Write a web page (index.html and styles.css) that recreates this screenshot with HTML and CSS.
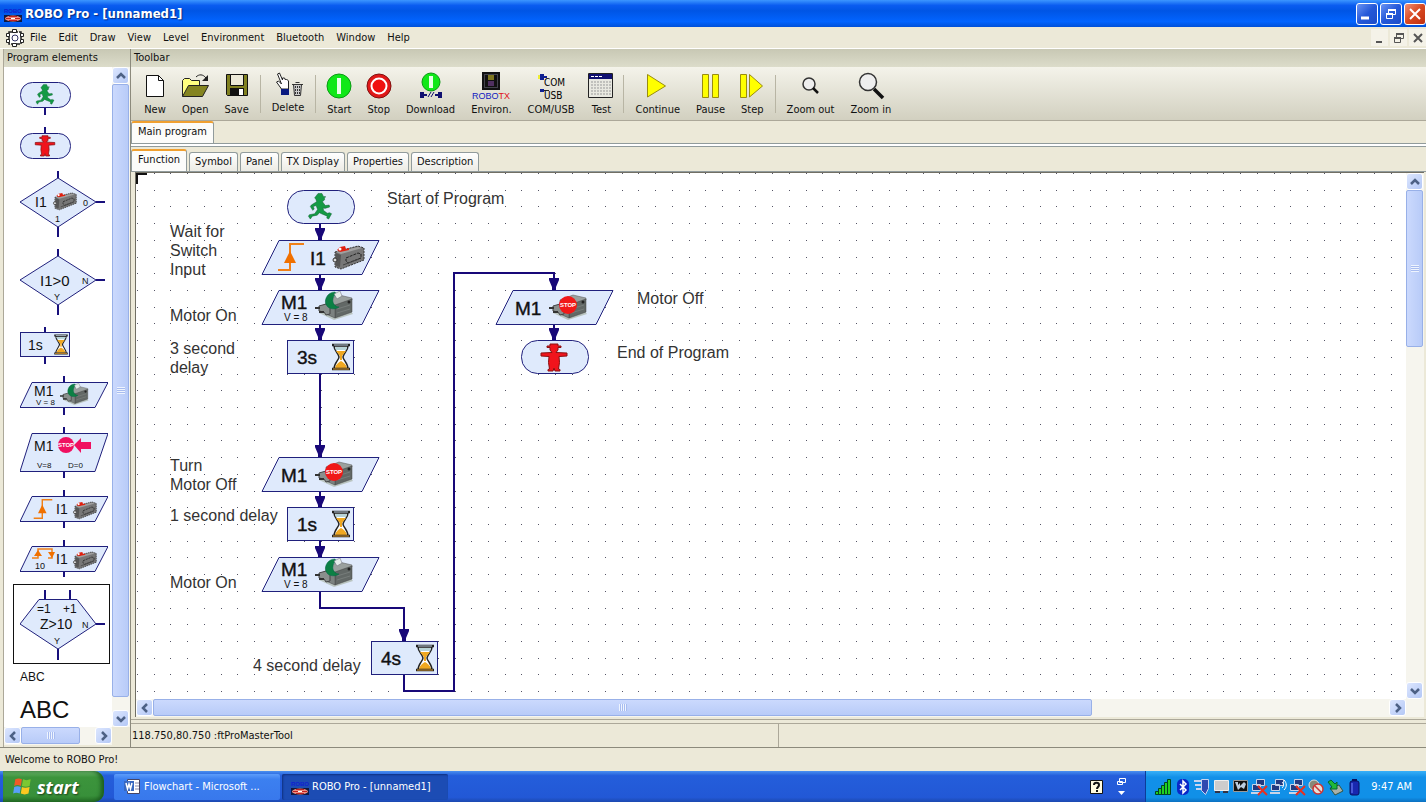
FILE: index.html
```html
<!DOCTYPE html>
<html lang="en">
<head>
  <meta charset="UTF-8" />
  <title>ROBO Pro - [unnamed1]</title>
  <link rel="stylesheet" href="styles.css">
</head>
<body>

  <!-- shared drawings -->
  <svg class="defs" aria-hidden="true">
    <symbol id="walker" viewBox="0 0 24 28" overflow="visible">
      <path fill="#149a45" stroke="#0c5a2c" stroke-width=".5" d="M8 3l2-2.500h4l1.500 3 2.500.5-1.500 1 .3 2-2.300 2 3 4 4-.5.5 2-5 1.500-1.500-1v3l4 3 2.500-.5 2 1-3 5.500-2-1 .5-2-6-2.500-2-1-2.500 2.500-5 1L2 27l-2-3 1-1.500 5.500-1L9.500 17 8 13l-3 1 1 2.500-1.500 1.500L2 14l1-1.500L8.500 9l-.5-2-1.500-2z"/>
    </symbol>
    <symbol id="stander" viewBox="0 0 28 28" overflow="visible">
      <path fill="#f0141c" stroke="#8a1010" d="M10 1h8v2h3v1.500h-3V7l-2 2.500L27 10v3l-8 .5.500 6-1 6.500 1.500.5v1.500h-5l-1-3-1 3H8v-1.500l1.500-.5-1-6.500.500-6L1 13v-3l11-.5L10 7V4.500H7V3h3z"/>
    </symbol>
    <symbol id="switch" viewBox="0 0 34 26" overflow="visible">
      <path fill="#777" stroke="#333" stroke-dasharray="2 1" d="M4 8L27 2l6 2v12L10 25l-6-2z"/>
      <path fill="#a0a0a0" d="M5 8l22-5 4 1L10 10z"/>
      <path fill="#555" d="M10 11l-1 12-4-1V9z"/>
      <path fill="#e02010" d="M6 6l3-3 5-1 1 3 3-1v2l-9 2z"/>
      <circle cx="9" cy="5" r="1.500" fill="#fff"/>
      <circle cx="4" cy="16" r="2" fill="#ddd" stroke="#333"/>
      <path fill="none" stroke="#222" stroke-dasharray="3 1" d="M15 14l12-5 3 1v4l-13 5-2-2z"/>
      <path stroke="#444" d="M12 21l16-6"/>
    </symbol>
    <symbol id="motor" viewBox="0 0 40 28" overflow="visible">
      <path fill="#b9c4c0" d="M4 21l15 7 19-6-3-4z"/>
      <path fill="#9aa09e" stroke="#555" stroke-width=".5" d="M11 8l13-5 13 3v2l-17 6z"/>
      <path fill="#626866" stroke="#444" stroke-width=".5" d="M20 13l17-6v13l-17 6z"/>
      <path fill="#7c8280" stroke="#444" stroke-width=".5" d="M11 8l9 5v13l-9-4z"/>
      <path fill="#8a8f8d" stroke="#444" d="M4 14l7-2 4 3v7l-4 1-2-3-5-1z"/>
      <path stroke="#333" stroke-width="2" d="M0 16h5M4 20h5"/>
      <path stroke="#777d7b" d="M22 17l13-4M22 21l13-4"/>
      <circle cx="34" cy="10" r="1.500" fill="#222"/>
    </symbol>
    <symbol id="motor-on" viewBox="0 0 40 28" overflow="visible">
      <use href="#motor" width="40" height="28"/>
      <path fill="#0c8044" stroke="#064" stroke-width=".5" d="M20 0c-8 0-12 9-8 14 2 3 8 4 12 1-4 0-7-4-6-8 0-2 1-4 4-4z"/>
      <path fill="#e4ece9" stroke="#667" stroke-width=".5" d="M19 2l6-3 2 5-5 3z"/>
    </symbol>
    <symbol id="motor-off" viewBox="0 0 40 28" overflow="visible">
      <use href="#motor" width="40" height="28"/>
      <circle cx="19" cy="13" r="9" fill="#f01818"/>
      <text class="stop-text" x="19" y="15" text-anchor="middle">STOP</text>
    </symbol>
    <symbol id="hourglass" viewBox="0 0 18 28" overflow="visible">
      <path fill="#fff" stroke="#222" stroke-width="1.500" d="M2 3c0 5 5 8 5 11S2 20 2 26h14c0-6-5-9-5-12s5-6 5-11z"/>
      <path fill="#b8d4d8" d="M3 4h12l-1 3H4z"/>
      <path fill="#f0a820" d="M4 8h10l-4 5H8zM8 13h2v4h-2zM3 25c1-4 4-6 6-7 2 1 5 3 6 7z"/>
      <path stroke="#222" stroke-width="2.500" d="M0 2h18M0 26h18"/>
      <path stroke="#d9982a" d="M1 26h16"/>
      <path stroke="#bcd" d="M2 2h14"/>
    </symbol>
    <symbol id="edge" viewBox="0 0 26 28" overflow="visible">
      <path fill="none" stroke="#f08018" stroke-width="2" d="M0 27h12V1h14"/>
      <path fill="#f07000" d="M12 8l6 12H6z"/>
    </symbol>
    <symbol id="windows" viewBox="0 0 20 20">
      <path fill="#f05a28" d="M3 3c2-1 4-1 6 0L8 9c-2-1-4-1-6 0z"/>
      <path fill="#7cc832" d="M10 3c2 1 4 1 7 0l-1 6c-2 1-5 1-7 0z"/>
      <path fill="#58a0f8" d="M2 10c2-1 4-1 6 0l-1 6c-2-1-4-1-6 0z"/>
      <path fill="#fcc820" d="M9 10c2 1 4 1 7 0l-1 6c-2 1-5 1-7 0z"/>
    </symbol>
    <symbol id="robo" viewBox="0 0 18 18" overflow="visible">
      <text class="robo-text" x="9" y="8" text-anchor="middle">ROBO</text>
      <path fill="#101840" d="M0 10h18v7H0z"/>
      <ellipse cx="9" cy="13.500" rx="8" ry="3" fill="#f09080"/>
      <path stroke="#c02020" d="M2 13.500h14M5 11.500h8M5 15.500h8"/>
      <path stroke="#fff" d="M7 13.500h4"/>
    </symbol>
    <symbol id="restore" viewBox="0 0 14 14">
      <path fill="none" stroke="currentColor" d="M4.500 6V2.500h7v5H9"/>
      <path stroke="currentColor" stroke-width="2" d="M4 3h8M2 7h7"/>
      <path fill="none" stroke="currentColor" d="M2.500 6.500h6v5h-6z"/>
    </symbol>
    <symbol id="chevron" viewBox="0 0 10 10">
      <path fill="none" stroke="#4d6185" stroke-width="2.500" d="M1 7l4-4 4 4"/>
    </symbol>
    <symbol id="computers" viewBox="0 0 18 18">
      <path fill="#223a80" stroke="#c8d4e8" d="M6.500 1.500h8v6h-8zM2.500 6.500h8v6h-8z"/>
      <path stroke="#c8d4e8" stroke-width="2" d="M1 15h10"/>
    </symbol>
  </svg>

  <header class="titlebar">
    <svg class="icon18"><use href="#robo"/></svg>
    <h1>ROBO Pro - [unnamed1]</h1>
    <div class="window-buttons">
      <button class="winbtn" aria-label="Minimize"><svg width="14" height="14"><path stroke="#fff" stroke-width="3" d="M1 11h8"/></svg></button>
      <button class="winbtn" aria-label="Restore"><svg width="14" height="14"><use href="#restore"/></svg></button>
      <button class="winbtn close" aria-label="Close"><svg width="14" height="14"><path stroke="#fff" stroke-width="2" d="M2 2l10 10M12 2L2 12"/></svg></button>
    </div>
  </header>

  <nav class="menubar">
    <svg class="icon18" viewBox="0 0 18 18">
      <path fill="#fff" stroke="#222" stroke-width="1.500" stroke-dasharray="4 1" d="M3 3h12v12H3z"/>
      <path fill="#fff" stroke="#222" d="M6.500.5h4v3h-4zM6.500 14.500h4v3h-4zM.5 4.500h3v3h-3zM.5 10.500h3v3h-3zM14.500 4.500h3v3h-3zM14.500 10.500h3v3h-3z"/>
      <circle cx="9" cy="9" r="3" fill="#fff" stroke="#336"/>
    </svg>
    <a href="#">File</a>
    <a href="#">Edit</a>
    <a href="#">Draw</a>
    <a href="#">View</a>
    <a href="#">Level</a>
    <a href="#">Environment</a>
    <a href="#">Bluetooth</a>
    <a href="#">Window</a>
    <a href="#">Help</a>
    <div class="mdi-buttons">
      <button aria-label="Minimize document"><svg width="14" height="14"><path stroke="#555" stroke-width="2" d="M3 11h6"/></svg></button>
      <button aria-label="Restore document"><svg width="14" height="14"><use href="#restore"/></svg></button>
      <button aria-label="Close document"><svg width="14" height="14"><path stroke="#555" stroke-width="2" d="M3 3l8 8M11 3l-8 8"/></svg></button>
    </div>
  </nav>

  <main class="main">
    <aside class="side">
      <h2 class="panel-title">Program elements</h2>
      <div class="side-body">
        <div class="side-left">
          <div class="elements">
            <button aria-label="Start"><svg width="51" height="33">
              <path class="wire" d="M25 26v7"/><rect class="shape" x=".5" y=".5" width="50" height="25" rx="12"/>
              <use href="#walker" x="16" y="2" width="18" height="21"/></svg></button>
            <button aria-label="End"><svg width="51" height="32">
              <path class="wire" d="M25 0v6"/><rect class="shape" x=".5" y="6.500" width="50" height="25" rx="12"/>
              <use href="#stander" x="14" y="8" width="22" height="21"/></svg></button>
            <button aria-label="Digital branch"><svg width="86" height="66">
              <path class="wire" d="M38 0v7M38 56v10M76 31h9"/><path class="shape" d="M0 31L38 7l38 24-38 25z"/>
              <text class="t14" x="15" y="36">I1</text><use href="#switch" x="32" y="20" width="25" height="20"/>
              <text class="t9" x="63" y="35">0</text><text class="t9" x="35" y="51">1</text></svg></button>
            <button aria-label="Analog branch"><svg width="86" height="66">
              <path class="wire" d="M38 0v7M38 56v10M76 31h9"/><path class="shape" d="M0 31L38 7l38 24-38 25z"/>
              <text class="t15" x="20" y="37">I1&gt;0</text><text class="t9" x="62" y="35">N</text><text class="t9" x="34" y="51">Y</text></svg></button>
            <button aria-label="Time delay"><svg width="51" height="37">
              <path class="wire" d="M25 0v6M25 30v7"/><rect class="shape" x=".5" y="5.500" width="49" height="24"/>
              <text class="t14" x="8" y="23">1s</text><use href="#hourglass" x="34" y="7" width="14" height="21"/></svg></button>
            <button aria-label="Motor output"><svg width="88" height="39">
              <path class="wire" d="M44 0v7M44 32v7"/><path class="shape" d="M12 6.500h76L75 31.500H0z"/>
              <text class="t14" x="14" y="20">M1</text><text class="t8" x="16" y="29">V = 8</text><use href="#motor-on" x="40" y="8" width="30" height="21"/></svg></button>
            <button aria-label="Encoder motor"><svg width="88" height="51">
              <path class="wire" d="M44 0v7M44 44v7"/><path class="shape" d="M12 6.500h76L75 44.500H0z"/>
              <text class="t14" x="14" y="24">M1</text><text class="t8" x="17" y="41">V=8</text><text class="t8" x="48" y="41">D=0</text>
              <path fill="#f01060" d="M54 18l7-7v4h10v7H61v4z"/><circle cx="46" cy="18" r="8" fill="#f01060"/>
              <text class="stop-text" x="46" y="20" text-anchor="middle">STOP</text></svg></button>
            <button aria-label="Wait for input"><svg width="88" height="38">
              <path class="wire" d="M44 0v7M44 32v6"/><path class="shape" d="M12 6.500h76L75 31.500H0z"/>
              <use href="#edge" x="13" y="9" width="20" height="20"/><text class="t14" x="36" y="24">I1</text><use href="#switch" x="52" y="10" width="25" height="20"/></svg></button>
            <button aria-label="Pulse counter"><svg width="88" height="37">
              <path class="wire" d="M44 0v7M44 32v5"/><path class="shape" d="M12 6.500h76L75 31.500H0z"/>
              <path fill="none" stroke="#f08018" stroke-width="1.500" d="M12 18h6V9h14v9h-4"/><path fill="#f07000" d="M14 16l4-6 4 6zM28 12h7l-3 6z"/>
              <text class="t9" x="15" y="29">10</text><text class="t14" x="36" y="24">I1</text><use href="#switch" x="52" y="10" width="25" height="20"/></svg></button>
            <button class="selected" aria-label="Counter loop"><svg width="86" height="70">
              <path class="wire" d="M25 0v9M50 0v9M38 59v11M76 34h9"/><path class="shape" d="M19 9.500h38L76 34 38 59 0 34z"/>
              <text class="t12" x="17" y="23">=1</text><text class="t12" x="43" y="23">+1</text><text class="t14" x="20" y="39">Z&gt;10</text>
              <text class="t9" x="62" y="38">N</text><text class="t9" x="34" y="54">Y</text></svg></button>
            <button class="label-small">ABC</button>
            <button class="label-big">ABC</button>
          </div>
          <div class="hscroll">
            <button class="arrow left" aria-label="Scroll left"><svg width="10" height="10"><use href="#chevron"/></svg></button>
            <div class="track"><div class="thumb side-h"><span class="grip"></span></div></div>
            <button class="arrow right" aria-label="Scroll right"><svg width="10" height="10"><use href="#chevron"/></svg></button>
          </div>
        </div>
        <div class="vscroll">
          <button class="arrow up" aria-label="Scroll up"><svg width="10" height="10"><use href="#chevron"/></svg></button>
          <div class="track"><div class="thumb side-v"><span class="grip"></span></div></div>
          <button class="arrow down" aria-label="Scroll down"><svg width="10" height="10"><use href="#chevron"/></svg></button>
        </div>
      </div>
    </aside>

    <section class="work">
      <h2 class="panel-title">Toolbar</h2>
      <div class="toolbar">
        <button><svg viewBox="0 0 30 30"><path fill="#fff" stroke="#111" d="M6.500 4.500h12l5 5v16h-17z"/><path fill="none" stroke="#111" d="M18.500 4.500v5h5"/></svg>New</button>
        <button><svg viewBox="0 0 30 30"><path fill="#ffff80" stroke="#222" d="M2.500 25.500v-16l2-2h5l2 2h8v5"/><path fill="#848420" stroke="#222" d="M2.500 25.500l6-11h20l-6 11z"/><path fill="none" stroke="#222" d="M16 6c3-3 7-3 10 1"/><path fill="#222" d="M28 4v6h-6z"/></svg>Open</button>
        <button><svg viewBox="0 0 30 30"><path fill="#808020" stroke="#111" d="M4.500 3.500h21v21h-20l-1-1z"/><path fill="#ece9d8" stroke="#111" d="M8.500 3.500h13v11h-13z"/><path fill="#111" d="M8 17h14v8H8z"/><path fill="#fff" d="M17 18h4v6h-4z"/></svg>Save</button>
        <span class="sep"></span>
        <button class="raised"><svg viewBox="0 0 30 30"><path fill="#fff" stroke="#222" d="M8.500 20l-5-7 2-1 3 3-4-10 2-1 3 7 0-2 2 0 1 2 1-1 2 2v8z"/><path fill="#0a1a80" d="M8 20h8v6H8z"/><path fill="#ccc" stroke="#333" d="M20.500 15.500h8l-1 11h-6zM19 15.500h11M22.500 13.500h4"/><path stroke="#333" stroke-dasharray="2 1" d="M22.500 17v9M24.500 17v9M26.500 17v9"/></svg>Delete</button>
        <span class="sep"></span>
        <button><svg viewBox="0 0 30 30"><circle cx="15" cy="15" r="12" fill="#10e818" stroke="#0b9a14"/><path fill="#e8ffe8" d="M13 7h4v16h-4z"/></svg>Start</button>
        <button><svg viewBox="0 0 30 30"><circle cx="15" cy="15" r="12" fill="#e01818" stroke="#801010"/><circle cx="15" cy="15" r="7.500" fill="#f01010" stroke="#fff" stroke-width="2"/></svg>Stop</button>
        <button><svg viewBox="0 0 30 30"><circle cx="15" cy="11" r="9" fill="#10e818" stroke="#0b9a14"/><path fill="#e8ffe8" d="M13 5h4v12h-4z"/><path fill="#101070" d="M4 21h4v2h3v2H8v2H4zM26 21h-4v2h-3v2h3v2h4z"/><path stroke="#101070" d="M12 26l3-5M15 26l3-5"/></svg>Download</button>
        <button><svg viewBox="0 0 30 30"><path fill="#111" d="M6 1h18v18H6z"/><path fill="none" stroke="#778" stroke-dasharray="1 1" d="M8.500 3.500h13v13h-13z"/><path fill="#807820" d="M12 4h6v5h-6z"/><path fill="#503060" d="M12 10h6v5h-6z"/><text class="robotx" x="15" y="28" text-anchor="middle">ROBO<tspan fill="#e01020">TX</tspan></text></svg>Environ.</button>
        <button><svg viewBox="0 0 30 30"><path fill="#102090" d="M4 3h4v2h3v2H8v2H4zM4 18h4v3H4z"/><path fill="#ee3" d="M2 4h2v4H2z"/><path stroke="#222" d="M8 19.500h5"/><text class="comusb" x="8" y="15">COM</text><text class="comusb" x="8" y="28">USB</text></svg>COM/USB</button>
        <button><svg viewBox="0 0 30 30"><path fill="#e8e8e0" stroke="#222" d="M2.500 2.500h24v24h-24z"/><path fill="#101070" d="M3 3h23v5H3z"/><path stroke="#fff" stroke-dasharray="3 1" d="M5 5.500h11"/><path stroke="#999" stroke-dasharray="2 1" d="M5 11h20M5 14h20M5 17h20M5 20h20M5 23h20"/></svg>Test</button>
        <span class="sep"></span>
        <button><svg viewBox="0 0 30 30"><path fill="#ff0" stroke="#998c10" d="M4.500 3.500l18 11.500-18 11z"/></svg>Continue</button>
        <button><svg viewBox="0 0 30 30"><path fill="#ff0" stroke="#998c10" d="M6.500 3.500h6v23h-6zM16.500 3.500h6v23h-6z"/></svg>Pause</button>
        <button><svg viewBox="0 0 30 30"><path fill="#ff0" stroke="#998c10" d="M3.500 3.500h6v23h-6zM12.500 3.500l13 11.500-13 11z"/></svg>Step</button>
        <span class="sep"></span>
        <button><svg viewBox="0 0 30 30"><circle cx="13" cy="13" r="6" fill="#eee" stroke="#333" stroke-width="1.500"/><path stroke="#111" stroke-width="2.500" d="M17 17l5 5"/></svg>Zoom out</button>
        <button><svg viewBox="0 0 30 30"><circle cx="12" cy="11" r="8.500" fill="#eee" stroke="#333" stroke-width="1.500"/><path stroke="#111" stroke-width="3.500" d="M18 18l9 9"/></svg>Zoom in</button>
      </div>

      <div class="tabs program-tabs">
        <button class="tab active">Main program</button>
      </div>
      <div class="tabs view-tabs">
        <button class="tab active">Function</button>
        <button class="tab">Symbol</button>
        <button class="tab">Panel</button>
        <button class="tab">TX Display</button>
        <button class="tab">Properties</button>
        <button class="tab">Description</button>
      </div>

      <div class="canvas-frame">
        <div class="canvas-row">
          <svg class="canvas" role="img" aria-label="Flowchart">
            <defs>
              <path id="dotrow" stroke="#556" d="M1 .5h1M18 .5h1M34 .5h1M51 .5h1M68 .5h1M85 .5h1M101 .5h1"/>
              <pattern id="dots" width="117" height="117" patternUnits="userSpaceOnUse">
                <use href="#dotrow"/>
                <use href="#dotrow" y="17"/>
                <use href="#dotrow" y="33"/>
                <use href="#dotrow" y="50"/>
                <use href="#dotrow" y="67"/>
                <use href="#dotrow" y="84"/>
                <use href="#dotrow" y="100"/>
              </pattern>
              <marker id="arrow" markerUnits="userSpaceOnUse" markerWidth="10" markerHeight="12" refX="5" refY="12">
                <path fill="#180878" d="M0 0h10v2L7 9v3H3V9L0 2z"/>
              </marker>
            </defs>
            <rect class="dots" width="100%" height="100%"/>
            <path fill="none" stroke="#111" stroke-width="2" d="M1 11V1h10"/>

            <!-- connections -->
            <path class="flow" d="M184 51v16"/>
            <path class="flow" d="M184 101v16"/>
            <path class="flow" d="M184 151v16"/>
            <path class="flow" d="M184 200v84"/>
            <path class="flow" d="M184 318v17"/>
            <path class="flow" d="M184 368v17"/>
            <path class="flow" d="M184 419v16h84v33"/>
            <path class="flow" d="M268 501v17h50V100h100v17"/>
            <path class="flow" d="M418 151v16"/>

            <!-- nodes -->
            <g transform="translate(151 17)">
              <rect class="shape" x=".5" y=".5" width="67" height="33" rx="16"/>
              <use href="#walker" x="21" y="3" width="24" height="27"/>
            </g>
            <g transform="translate(126 67)">
              <path class="shape" d="M17 .5h100l-17 34H0z"/>
              <use href="#edge" x="16" y="3" width="26" height="28"/>
              <text class="node-text" x="48" y="25">I1</text>
              <use href="#switch" x="69" y="4" width="34" height="26"/>
            </g>
            <g transform="translate(126 117)">
              <path class="shape" d="M17 .5h100l-17 34H0z"/>
              <text class="node-text" x="19" y="19">M1</text>
              <text class="node-sub" x="22" y="31">V = 8</text>
              <use href="#motor-on" x="53" y="2" width="40" height="28"/>
            </g>
            <g transform="translate(151 167)">
              <rect class="shape" x=".5" y=".5" width="66" height="33"/>
              <text class="node-text" x="10" y="24">3s</text>
              <use href="#hourglass" x="45" y="3" width="18" height="28"/>
            </g>
            <g transform="translate(126 284)">
              <path class="shape" d="M17 .5h100l-17 34H0z"/>
              <text class="node-text" x="19" y="25">M1</text>
              <use href="#motor-off" x="53" y="2" width="40" height="28"/>
            </g>
            <g transform="translate(151 334)">
              <rect class="shape" x=".5" y=".5" width="66" height="33"/>
              <text class="node-text" x="10" y="24">1s</text>
              <use href="#hourglass" x="45" y="3" width="18" height="28"/>
            </g>
            <g transform="translate(126 384)">
              <path class="shape" d="M17 .5h100l-17 34H0z"/>
              <text class="node-text" x="19" y="19">M1</text>
              <text class="node-sub" x="22" y="31">V = 8</text>
              <use href="#motor-on" x="53" y="2" width="40" height="28"/>
            </g>
            <g transform="translate(235 468)">
              <rect class="shape" x=".5" y=".5" width="66" height="33"/>
              <text class="node-text" x="10" y="24">4s</text>
              <use href="#hourglass" x="45" y="3" width="18" height="28"/>
            </g>
            <g transform="translate(360 117)">
              <path class="shape" d="M17 .5h100l-17 34H0z"/>
              <text class="node-text" x="19" y="25">M1</text>
              <use href="#motor-off" x="53" y="2" width="40" height="28"/>
            </g>
            <g transform="translate(385 167)">
              <rect class="shape" x=".5" y=".5" width="67" height="33" rx="16"/>
              <use href="#stander" x="19" y="3" width="28" height="28"/>
            </g>

            <!-- comments on the sheet -->
            <g class="notes">
              <text x="251" y="31">Start of Program</text>
              <text x="34" y="64">Wait for<tspan x="34" dy="19">Switch</tspan><tspan x="34" dy="19">Input</tspan></text>
              <text x="34" y="148">Motor On</text>
              <text x="34" y="181">3 second<tspan x="34" dy="19">delay</tspan></text>
              <text x="34" y="298">Turn<tspan x="34" dy="19">Motor Off</tspan></text>
              <text x="34" y="348">1 second delay</text>
              <text x="34" y="415">Motor On</text>
              <text x="117" y="498">4 second delay</text>
              <text x="501" y="131">Motor Off</text>
              <text x="481" y="185">End of Program</text>
            </g>
          </svg>
          <div class="vscroll">
            <button class="arrow up" aria-label="Scroll up"><svg width="10" height="10"><use href="#chevron"/></svg></button>
            <div class="track"><div class="thumb canvas-v"><span class="grip"></span></div></div>
            <button class="arrow down" aria-label="Scroll down"><svg width="10" height="10"><use href="#chevron"/></svg></button>
          </div>
        </div>
        <div class="hscroll corner">
          <button class="arrow left" aria-label="Scroll left"><svg width="10" height="10"><use href="#chevron"/></svg></button>
          <div class="track"><div class="thumb canvas-h"><span class="grip"></span></div></div>
          <button class="arrow right" aria-label="Scroll right"><svg width="10" height="10"><use href="#chevron"/></svg></button>
        </div>
      </div>

      <div class="tool-status">
        <span>118.750,80.750 :ftProMasterTool</span>
        <span></span>
      </div>
    </section>
  </main>

  <div class="statusbar">Welcome to ROBO Pro!</div>

  <footer class="taskbar">
    <button class="start"><svg width="22" height="22"><use href="#windows"/></svg>start</button>
    <button class="task"><svg width="18" height="18"><path fill="#fff" stroke="#446" d="M4.500 1.500h12v14h-12z"/><path stroke="#88a" d="M12 5h4M12 8h4M12 11h4"/><path fill="#3868c0" d="M1 3h10v10H1z"/><path fill="none" stroke="#fff" stroke-width="1.500" d="M3 5l1.500 6L6 6l1.500 5L9 5"/></svg>Flowchart - Microsoft ...</button>
    <button class="task pressed"><svg width="18" height="18"><use href="#robo"/></svg>ROBO Pro - [unnamed1]</button>
    <div class="langbar">
      <svg width="14" height="16"><path fill="#fffbe0" stroke="#111" d="M.5 1.500h12v13H.5z"/><path fill="none" stroke="#111" stroke-width="2" d="M4 6c0-3 5-3 5 0 0 2-2 2-2 4M7 11v2"/></svg>
      <svg width="12" height="20"><path fill="none" stroke="#fff" d="M3.500 1.500h6v4h-6zM1.500 4.500h5v3h-5z"/><path fill="#fff" d="M2 14h7l-3.500 4z"/></svg>
    </div>
    <div class="tray">
      <svg viewBox="0 0 18 18"><path fill="#20d020" stroke="#042" d="M.5 13.500h3v3h-3zM3.500 10.500h3v6h-3zM6.500 7.500h3v9h-3zM9.500 4.500h3v12h-3zM12.500 1.500h3v15h-3z"/></svg>
      <svg viewBox="0 0 18 18"><rect x="3" y="1" width="12" height="16" rx="5" fill="#0a28c8"/><path fill="none" stroke="#fff" stroke-width="1.500" d="M6 6l6 6-3 3V3l3 3-6 6"/></svg>
      <svg viewBox="0 0 18 18"><path fill="#3048b0" stroke="#c8d4f0" d="M8.500 1.500h7v9l-3 6-4-4z"/><path stroke="#c8d4f0" stroke-width="2" d="M1 3h7M2 7h6M3 11h6"/></svg>
      <svg viewBox="0 0 18 18"><path fill="#ccc" stroke="#eee" d="M2.500 2.500h14v10h-14z"/><path stroke="#334" stroke-width="2" d="M3 14h5M11 14h5"/></svg>
      <svg viewBox="0 0 18 18"><path fill="#111" stroke="#999" d="M2.500 2.500h14v11h-14z"/><path fill="#bcd" d="M4 4h3v3l2-2v3l4-4 2 2-2 5-3-2-3 3z"/></svg>
      <svg viewBox="0 0 18 18"><use href="#computers"/><path stroke="#e83020" stroke-width="2" d="M8 8l9 9M17 8l-9 9"/></svg>
      <svg viewBox="0 0 18 18"><use href="#computers"/><path fill="none" stroke="#fff" d="M13 4c2 2 2 4 0 6M15 2c3 3 3 7 0 10"/></svg>
      <svg viewBox="0 0 18 18"><use href="#computers"/><path stroke="#e83020" stroke-width="2" d="M8 8l9 9M17 8l-9 9"/></svg>
      <svg viewBox="0 0 18 18"><circle cx="7" cy="7" r="5" fill="#887" stroke="#ddd"/><circle cx="11" cy="11" r="5" fill="#e8e0d8" stroke="#c33" stroke-width="1.500"/><path stroke="#c33" stroke-width="1.500" d="M8 8l6 6"/></svg>
      <svg viewBox="0 0 18 18"><path fill="#a8b0a8" stroke="#354" d="M4 10l9-3 4 6-8 4z"/><path fill="#20b838" stroke="#063" d="M2 4l3-2 4 4 2-2v7H4l2-2z"/></svg>
      <svg viewBox="0 0 18 18"><rect x="5" y="3" width="9" height="14" rx="2" fill="#1828b0" stroke="#081060"/><path fill="#081060" d="M7 1h5v2H7z"/><path stroke="#78f" d="M7 5v10"/></svg>
      <span class="clock">9:47 AM</span>
    </div>
  </footer>

</body>
</html>
```
FILE: styles.css
```css
* {
  box-sizing: border-box;
}
body {
  margin: 0;
  height: 100vh;
  display: flex;
  flex-direction: column;
  background: #ece9d8;
  color: #111;
  font: 11px/14px "DejaVu Sans Condensed", "Noto Sans", sans-serif;
  overflow: hidden;
}
button {
  font: inherit;
  color: inherit;
  border: none;
  background: none;
  padding: 0;
}
h1, h2 {
  margin: 0;
  font-size: inherit;
  font-weight: normal;
}
svg {
  display: block;
  flex: none;
}
.defs {
  position: absolute;
  width: 0;
  height: 0;
}
.icon18 {
  width: 18px;
  height: 18px;
}

/* title and menu */
.titlebar {
  display: flex;
  align-items: center;
  gap: 3px;
  height: 27px;
  padding-left: 4px;
  background: linear-gradient(#3c96ff, #0a5cf0 20%, #0055e5 40%, #0264ff 80%, #0050d8);
  color: #fff;
}
.titlebar h1 {
  font-size: 13px;
  font-weight: bold;
  text-shadow: 1px 1px 1px #0a2a80;
}
.window-buttons, .mdi-buttons {
  display: flex;
  gap: 2px;
  margin-left: auto;
}
.winbtn {
  display: grid;
  place-items: center;
  width: 22px;
  height: 22px;
  border: 1px solid #fff;
  border-radius: 3px;
  background: linear-gradient(135deg, #6a94f4, #2458d8 50%, #1c4cc8);
}
.winbtn.close {
  background: linear-gradient(135deg, #f09078, #d84820 50%, #c03010);
}
.menubar {
  display: flex;
  align-items: center;
  height: 22px;
  padding-left: 6px;
  border-bottom: 1px solid #fff;
}
.menubar a {
  color: inherit;
  text-decoration: none;
  padding: 0 6px;
}
.mdi-buttons button {
  display: grid;
  place-items: center;
  width: 17px;
  height: 17px;
  background: #f4f2e8;
  color: #555;
}

/* layout */
.main {
  display: flex;
  flex: 1;
  min-height: 0;
  padding-left: 3px;
}
.side {
  display: flex;
  flex-direction: column;
  width: 128px;
  border-left: 1px solid #aca899;
  border-right: 1px solid #8c8a7c;
}
.panel-title {
  height: 18px;
  padding: 2px 3px;
  background: linear-gradient(#c8c8b4, #dcdcca);
}
.side-body {
  display: flex;
  flex: 1;
  min-height: 0;
  padding-bottom: 2px;
}
.side-left {
  display: flex;
  flex-direction: column;
  flex: 1;
  min-width: 0;
  background: #fff;
}
.side-body > .vscroll {
  padding-bottom: 18px;
  background-clip: content-box;
}
.elements {
  display: flex;
  flex-direction: column;
  align-items: flex-start;
  gap: 12px;
  flex: 1;
  min-height: 0;
  padding: 15px 0 0 9px;
  overflow: hidden;
}
.elements button {
  padding-left: 7px;
}
.elements .selected {
  padding: 5px 3px 3px 6px;
  border: 1px solid #111;
  margin: -5px 0 -6px;
}
.elements .label-small {
  font: 12px/14px "Liberation Sans", sans-serif;
}
.elements .label-big {
  font: 24px/28px "Liberation Sans", sans-serif;
}

/* flowchart shapes */
.shape {
  fill: #dfeafc;
  stroke: #20207c;
}
.wire {
  stroke: #18107c;
  stroke-width: 2;
}
.elements text, .canvas text {
  font-family: "Liberation Sans", sans-serif;
  fill: #111;
}
.t15 { font-size: 15px; }
.t14 { font-size: 14px; }
.t12 { font-size: 12px; }
.t9 { font-size: 9px; }
.t8 { font-size: 8px; }
.stop-text, .elements .stop-text, .canvas .stop-text {
  font: bold 6px "Liberation Sans", sans-serif;
  fill: #fff;
}
.robo-text {
  font: bold 6px "Liberation Sans", sans-serif;
  fill: #1020d0;
}
.robotx {
  font: 9px "Liberation Sans", sans-serif;
  fill: #1020c0;
}
.comusb {
  font: 10px "DejaVu Sans Condensed", sans-serif;
}

/* toolbar */
.work {
  display: flex;
  flex-direction: column;
  flex: 1;
  min-width: 0;
}
.toolbar {
  display: flex;
  align-items: center;
  height: 54px;
  padding-left: 5px;
  background: linear-gradient(#f4f3ea, #d2d0c0);
  border-bottom: 1px solid #aca899;
}
.toolbar button {
  display: flex;
  flex-direction: column;
  align-items: center;
  gap: 2px;
  padding: 0 8px;
}
.toolbar button svg {
  width: 30px;
  height: 30px;
  margin: 0 -4px;
  overflow: visible;
}
.toolbar .raised {
  padding-bottom: 4px;
}
.sep {
  width: 1px;
  height: 38px;
  margin: 0 3px;
  background: #b8b5a4;
}

/* tabs */
.tabs {
  display: flex;
  align-items: flex-end;
  border-bottom: 1px solid #919b9c;
}
.program-tabs {
  height: 23px;
}
.view-tabs {
  gap: 2px;
  height: 26px;
  border-top: 1px solid #919b9c;
  margin-top: 2px;
  box-shadow: 0 -2px 0 #fff;
}
.tab {
  height: 19px;
  padding: 0 5px;
  border: 1px solid #919b9c;
  border-bottom: none;
  border-radius: 3px 3px 0 0;
  background: linear-gradient(#fff, #ecebe4);
}
.tab.active {
  height: 22px;
  padding: 0 6px 2px;
  border-top: 2px solid #f0a030;
  background: #fcfcfa;
}

/* drawing sheet */
.canvas-frame {
  display: flex;
  flex-direction: column;
  flex: 1;
  min-height: 0;
  margin: 0 2px 0 4px;
  border: 1px solid #716f64;
  border-width: 1px 0 0 1px;
  background: #fff;
}
.canvas-row {
  display: flex;
  flex: 1;
  min-height: 0;
}
.canvas {
  flex: 1;
  min-width: 0;
  height: 100%;
  overflow: hidden;
}
.dots {
  fill: url(#dots);
}
.flow {
  fill: none;
  stroke: #180878;
  stroke-width: 2;
  marker-end: url(#arrow);
}
.node-text {
  font-size: 19px;
  stroke: #111;
  stroke-width: .4;
}
.node-sub {
  font-size: 10px;
}
.canvas .notes text {
  font-size: 16px;
  fill: #333;
}

/* scroll bars */
.vscroll {
  display: flex;
  flex-direction: column;
  width: 18px;
  background: #f6f5ee;
}
.hscroll {
  display: flex;
  height: 18px;
  background: #f6f5ee;
}
.hscroll.corner {
  padding-right: 18px;
}
.arrow {
  display: grid;
  place-items: center;
  width: 17px;
  height: 17px;
  border: 1px solid #fff;
  border-radius: 3px;
  background: linear-gradient(135deg, #dce6fe, #b4c8f6);
}
.arrow.left svg { transform: rotate(-90deg); }
.arrow.right svg { transform: rotate(90deg); }
.arrow.down svg { transform: rotate(180deg); }
.track {
  flex: 1;
}
.thumb {
  display: grid;
  place-items: center;
  width: 17px;
  height: 17px;
  border: 1px solid #98b0e8;
  border-radius: 2px;
  background: linear-gradient(90deg, #cbd9fd, #b8cbf8);
}
.hscroll .thumb {
  background: linear-gradient(#cbd9fd, #b8cbf8);
}
.thumb.side-v { height: 98%; }
.thumb.side-h { width: 80%; }
.thumb.canvas-v { height: 32%; }
.thumb.canvas-h { width: 76%; }
.grip {
  width: 8px;
  height: 7px;
  background: repeating-linear-gradient(#eef4fe 0 1px, #a8bcf0 1px 2px);
}
.hscroll .grip {
  background: repeating-linear-gradient(90deg, #eef4fe 0 1px, #a8bcf0 1px 2px);
}

/* status bars */
.tool-status {
  display: flex;
  height: 28px;
  margin-top: 2px;
  border-top: 1px solid #aca899;
  padding-top: 3px;
}
.tool-status span {
  flex: 1;
  padding: 5px 1px;
  border-top: 1px solid #aca899;
}
.tool-status span + span {
  border-left: 1px solid #aca899;
}
.statusbar {
  height: 24px;
  padding: 5px;
  border-top: 1px solid #8c8a7c;
}

/* taskbar */
.taskbar {
  display: flex;
  align-items: center;
  height: 31px;
  padding-left: 3px;
  background: linear-gradient(#4a90f0, #245edb 15%, #2258d6 85%, #1c48b0);
  color: #fff;
}
.start {
  display: flex;
  align-items: center;
  gap: 3px;
  width: 101px;
  height: 31px;
  margin-right: 10px;
  padding-left: 9px;
  border-radius: 0 10px 10px 0;
  background: linear-gradient(#70b870, #3c943c 20%, #38903a 80%, #267026);
  box-shadow: inset -3px 0 4px #1c5c20;
  font: italic bold 18px "Open Sans", sans-serif;
  text-shadow: 1px 1px 2px #1c4018;
}
.task {
  display: flex;
  align-items: center;
  gap: 3px;
  width: 166px;
  height: 26px;
  margin-right: 2px;
  padding-left: 9px;
  border-radius: 2px;
  background: linear-gradient(#5c9cfa, #3c80f0 20%, #3878ec);
  white-space: nowrap;
}
.task.pressed {
  background: #1c4cb4;
  box-shadow: inset 1px 1px 2px #103080;
}
.titlebar .icon18, .task svg {
  overflow: visible;
}
.langbar {
  display: flex;
  align-items: center;
  gap: 12px;
  margin-left: auto;
  padding-right: 17px;
}
.tray {
  display: flex;
  align-items: center;
  gap: 1px;
  height: 31px;
  padding: 0 14px 0 9px;
  border-left: 1px solid #0c3c98;
  background: linear-gradient(#38b0f8, #1290e8 20%, #1090e8 85%, #0c70c0);
}
.tray svg {
  width: 18px;
  height: 18px;
}
.clock {
  margin-left: 7px;
}
```
